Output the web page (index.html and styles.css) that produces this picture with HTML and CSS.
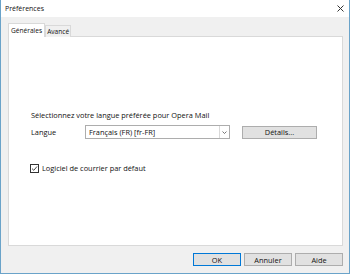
FILE: index.html
```html
<!DOCTYPE html>
<html lang="fr">
<head>
<meta charset="utf-8">
<link rel="stylesheet" href="styles.css">
</head>
<body>
<div class="window">
  <div class="titlebar">
    <span class="title">Préférences</span>
    <svg class="close" width="7" height="7" viewBox="0 0 7 7"><path d="M0.5 0.5L6.5 6.5M6.5 0.5L0.5 6.5" stroke="#333" stroke-width="1"/></svg>
  </div>
  <div class="body">
    <div class="tabs">
      <div class="tab active">Générales</div>
      <div class="tab">Avancé</div>
    </div>
    <div class="panel">
      <div class="prompt">Sélectionnez votre langue préférée pour Opera Mail</div>
      <div class="row">
        <span class="label">Langue</span>
        <div class="select">
          <span class="value">Français (FR) [fr-FR]</span>
          <span class="arrow"><svg width="5" height="3" viewBox="0 0 5 3"><path d="M0.5 0.5L2.5 2.5L4.5 0.5" stroke="#555" fill="none" stroke-width="0.8"/></svg></span>
        </div>
        <div class="btn details">Détails...</div>
      </div>
      <label class="check">
        <span class="box"><svg width="7" height="7" viewBox="0 0 7 7"><path d="M1 3.6L2.8 5.3L6 1.5" stroke="#333" fill="none" stroke-width="0.9"/></svg></span>
        Logiciel de courrier par défaut
      </label>
    </div>
    <div class="footer">
      <div class="btn ok">OK</div>
      <div class="btn">Annuler</div>
      <div class="btn">Aide</div>
    </div>
  </div>
</div>
</body>
</html>
```
FILE: styles.css
```css
html, body {
  margin: 0;
  padding: 0;
  width: 350px;
  height: 274px;
  overflow: hidden;
  font-family: "Open Sans", "Noto Sans", sans-serif;
  font-size: 7.4px;
  color: #111;
}
.window {
  box-sizing: border-box;
  width: 350px;
  height: 274px;
  border: 1px solid #6aa3c9;
  border-top: none;
  display: flex;
  flex-direction: column;
  background: #f0f0f0;
}
.titlebar {
  height: 17px;
  background: #fff;
  display: flex;
  align-items: center;
  justify-content: space-between;
  padding: 0 5px 0 4px;
  flex: none;
}
.title { font-size: 7px; }
.body {
  flex: 1;
  display: flex;
  flex-direction: column;
  padding: 6px 6px 0 7px;
}
.tabs {
  display: flex;
  align-items: flex-end;
  height: 14px;
  position: relative;
  z-index: 1;
}
.tab {
  box-sizing: border-box;
  height: 12px;
  padding: 0 1px;
  border: 1px solid #d9d9d9;
  border-bottom: none;
  background: #f0f0f0;
  line-height: 11px;
  font-size: 6.6px;
}
.tab.active {
  height: 14px;
  background: #fff;
  padding: 0 2px;
  line-height: 13px;
}
.panel {
  flex: none;
  height: 210px;
  box-sizing: border-box;
  background: #fff;
  border: 1px solid #d9d9d9;
  margin-top: -1px;
  padding: 73px 0 0 22px;
}
.prompt { height: 10px; line-height: 10px; }
.row {
  display: flex;
  align-items: center;
  margin-top: 5px;
  height: 14px;
}
.label { width: 54px; }
.select {
  box-sizing: border-box;
  width: 145px;
  height: 14px;
  border: 1px solid #adadad;
  display: flex;
  align-items: center;
  padding-left: 3px;
}
.select .value { flex: 1; }
.arrow {
  box-sizing: border-box;
  width: 10px;
  height: 12px;
  border-left: 1px solid #d9d9d9;
  display: flex;
  align-items: center;
  justify-content: center;
}
.btn {
  box-sizing: border-box;
  height: 13px;
  border: 1px solid #adadad;
  background: #e1e1e1;
  display: flex;
  align-items: center;
  justify-content: center;
}
.details { width: 75px; margin-left: 12px; }
.check {
  display: flex;
  align-items: center;
  margin-top: 24px;
  margin-left: -1px;
  gap: 3px;
}
.box {
  box-sizing: border-box;
  width: 9px;
  height: 9px;
  border: 1px solid #333;
  display: flex;
  align-items: center;
  justify-content: center;
}
.footer {
  display: flex;
  justify-content: flex-end;
  gap: 3px;
  padding-top: 7px;
  padding-right: 0;
}
.footer .btn { width: 48px; }
.btn.ok { border-color: #0078d7; }
```
